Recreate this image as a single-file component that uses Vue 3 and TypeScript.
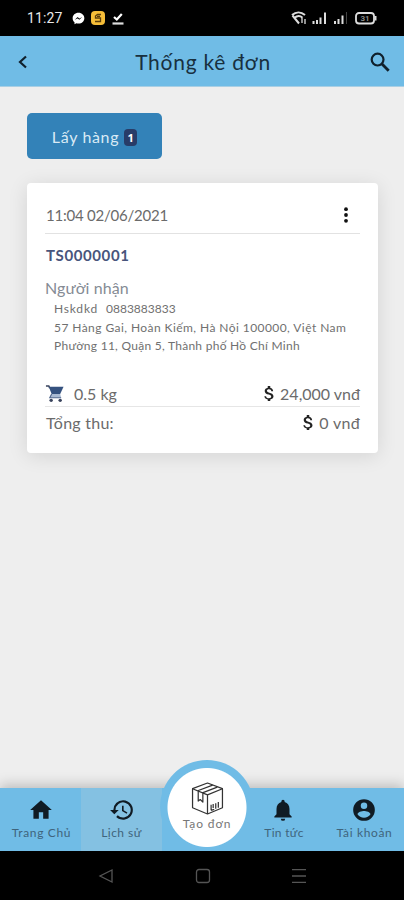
<script setup lang="ts">
interface Order {
  time: string
  code: string
  name: string
  phone: string
  address: string[]
  weight: string
  fee: string
  total: string
}

const order: Order = {
  time: '11:04 02/06/2021',
  code: 'TS0000001',
  name: 'Hskdkd',
  phone: '0883883833',
  address: ['57 Hàng Gai, Hoàn Kiếm, Hà Nội 100000, Việt Nam', 'Phường 11, Quận 5, Thành phố Hồ Chí Minh'],
  weight: '0.5 kg',
  fee: '24,000 vnđ',
  total: '0 vnđ',
}

const icons = {
  home: 'M10 20v-6h4v6h5v-8h3L12 3 2 12h3v8z',
  history:
    'M13 3a9 9 0 0 0-9 9H1l3.89 3.89.07.14L9 12H6a7 7 0 1 1 2.06 4.94l-1.42 1.42A9 9 0 1 0 13 3zm-1 5v5l4.28 2.54.72-1.21-3.5-2.08V8z',
  bell: 'M12 22a2 2 0 0 0 2-2h-4a2 2 0 0 0 2 2zm6-6v-5c0-3.07-1.64-5.64-4.5-6.32V4a1.5 1.5 0 0 0-3 0v.68C7.63 5.36 6 7.92 6 11v5l-2 2v1h16v-1z',
  user: 'M12 2a10 10 0 1 0 0 20 10 10 0 0 0 0-20zm0 3a3 3 0 1 1 0 6 3 3 0 0 1 0-6zm0 14.2A7.2 7.2 0 0 1 6 15.98c.03-1.99 4-3.08 6-3.08s5.97 1.09 6 3.08a7.2 7.2 0 0 1-6 3.22z',
  dollar:
    'M14.5 17.2c0 1.1-1 2.3-3.6 2.3-2.8 0-4.2-1.2-4.6-3.3H3.5c.4 3 2.7 4.7 5.5 5.2V24h4v-2.5c2.9-.5 5.2-2.1 5.2-5 0-4-3.5-5.1-6.6-5.9-3-.8-4-1.6-4-2.9 0-1.4 1.3-2.4 3.5-2.4 2.3 0 3.4 1.1 3.5 2.9h3c-.1-2.6-1.7-4.7-4.6-5.4V0H9v2.7C6.300 3.300 4.100 5.100 4.100 7.800c0 3.300 2.700 4.900 6.600 5.900 3.300.8 3.800 2 3.800 3.500z',
}
</script>

<template>
  <div class="screen">
    <div class="status">
      <span class="clock">11:27</span>
      <svg class="s-msg" viewBox="0 0 14 14">
        <path d="M7 .8C3.300.8.700 3.400.700 6.700c0 1.800.7 3.300 2 4.400v2.200l2-1.100c.7.2 1.500.3 2.300.3 3.700 0 6.300-2.600 6.300-5.800S10.700.8 7 .8z" fill="#fff" />
        <path d="M3 8.300 6 5.400l2 1.500 3-1.500-3 3-2-1.500z" fill="#111" />
      </svg>
      <svg class="s-app" viewBox="0 0 14 14">
        <rect width="14" height="14" rx="4" fill="#f5bd38" />
        <path d="M10 3.500H6.500L4.500 5v2h5v3.500H4M6 5.300h3" fill="none" stroke="#5b3e0a" stroke-width="1.300" />
      </svg>
      <svg class="s-check" viewBox="0 0 12 13">
        <path d="M2 5 4.800 7.500 9.800 2" fill="none" stroke="#fff" stroke-width="2.200" />
        <path d="M.5 11.500h11" stroke="#ddd" stroke-width="2.200" />
      </svg>
      <span class="grow"></span>
      <svg class="s-right" viewBox="0 0 88 14" fill="none" stroke="#ddd">
        <path d="M1 4C5 .5 10 .5 14 4M3.500 6.800c3-2.500 5.500-2.500 8 0M1.500 4.500l6.500 8" stroke-width="2" />
        <path d="M11 7v5M14 8v5" stroke-width="1.300" />
        <path d="M22.500 13v-3M26 13V9M29.500 13V6.500M34 13V1.500M44 13v-3M47.500 13V8M51.500 13V4.500" stroke-width="2" />
        <path d="M55.500 13V1" stroke="#444" />
        <rect x="65" y="2" width="18" height="10.500" rx="3" stroke-width="1.800" />
        <path d="M84.500 5v4.500" stroke-width="2" />
        <text x="69.500" y="10.400" class="batt">31</text>
      </svg>
    </div>

    <header class="top">
      <svg class="back" viewBox="0 0 10 14"><path d="M8 1.500 2 7l6 5.500" fill="none" stroke="#10202c" stroke-width="2.200" /></svg>
      <h1>Thống kê đơn</h1>
      <svg class="search" viewBox="0 0 20 20">
        <circle cx="7.600" cy="7.600" r="5.900" fill="none" stroke="#10202c" stroke-width="2.200" />
        <path d="m12 12 6.700 6.700" stroke="#10202c" stroke-width="2.800" />
      </svg>
    </header>

    <main>
      <button class="tab"><span>Lấy hàng</span><b>1</b></button>

      <section class="card">
        <div class="row head">
          <span class="time">{{ order.time }}</span>
          <svg class="dots" viewBox="0 0 4 16"><circle cx="2" cy="2.200" r="1.900" /><circle cx="2" cy="8" r="1.900" /><circle cx="2" cy="13.800" r="1.900" /></svg>
        </div>
        <div class="code"><span>{{ order.code }}</span></div>
        <div class="receiver">Người nhận</div>
        <div class="details">
          <div class="contact"><span class="name">{{ order.name }}</span><span class="phone">{{ order.phone }}</span></div>
          <div v-for="(line, i) in order.address" :key="i" :class="'addr' + i">{{ line }}</div>
        </div>
        <div class="row fee">
          <svg class="cart" viewBox="0 0 20 20">
            <path d="M1 2h3l1 2.500" fill="none" stroke="#39435c" stroke-width="1.600" />
            <path d="M4 3h15.500L16 10.500H7z" fill="#35527f" />
            <path d="M7 10.500h9l1 4H5z" fill="#a9bad2" />
            <path d="M7 10.500l-2 4h12" fill="none" stroke="#53698e" stroke-width="1.200" />
            <circle cx="6.500" cy="17.200" r="1.800" fill="#39435c" /><circle cx="16" cy="17.200" r="1.800" fill="#39435c" />
          </svg>
          <span class="weight">{{ order.weight }}</span>
          <span class="grow"></span>
          <svg class="dollar" viewBox="3 0 16 24"><path :d="icons.dollar" /></svg>
          <span class="price">{{ order.fee }}</span>
        </div>
        <div class="row total">
          <span class="sum">Tổng thu:</span>
          <span class="grow"></span>
          <svg class="dollar" viewBox="3 0 16 24"><path :d="icons.dollar" /></svg>
          <span class="zero">{{ order.total }}</span>
        </div>
      </section>
    </main>

    <nav class="tabs">
      <div class="item"><svg viewBox="0 0 24 24"><path :d="icons.home" /></svg><span class="l-home">Trang Chủ</span></div>
      <div class="item active"><svg viewBox="0 0 24 24"><path :d="icons.history" /></svg><span class="l-hist">Lịch sử</span></div>
      <div class="item"></div>
      <div class="item"><svg viewBox="0 0 24 24"><path :d="icons.bell" /></svg><span class="l-news">Tin tức</span></div>
      <div class="item"><svg viewBox="0 0 24 24"><path :d="icons.user" /></svg><span class="l-user">Tài khoản</span></div>
      <div class="create">
        <svg viewBox="0 0 32 32" fill="none" stroke="#333" stroke-width="1.200" stroke-linejoin="round">
          <path d="M16 1 30.500 6.500v18.500L16 31 1.500 25V6.500z" />
          <path d="M1.500 6.500 16 12.500l14.500-6M16 12.500V31M6.500 8.500l14.500-5.500M11 10.500l14.500-5.500M7 9v9.500l2-1.500 2.500 2.500V11" />
          <path d="M19.500 22v5.500M21.500 21.300v4M24 20.500v5.500M26.500 19.500v5.500M19.500 27.500l3-1" />
        </svg>
        <span>Tạo đơn</span>
      </div>
    </nav>

    <div class="system">
      <svg class="y-back" viewBox="0 0 16 16"><path d="M14 2v12L2 8z" /></svg>
      <svg class="y-home" viewBox="0 0 16 16"><rect x="1.500" y="1.500" width="13" height="13" rx="2.500" /></svg>
      <svg class="y-menu" viewBox="0 0 16 16"><path d="M1 1.700h14M1 8h14M1 14.300h14" /></svg>
    </div>
  </div>
</template>

<style>
body {
  background: #eee;
}
</style>

<style scoped>
.screen {
  width: 404px;
  height: 900px;
  display: flex;
  flex-direction: column;
  background: #eee;
  font-family: Lato, "Noto Sans", sans-serif;
  color: #6b6b6b;
  overflow: hidden;
  white-space: nowrap;
}
svg {
  display: block;
  flex: none;
}
.grow {
  flex: 1;
}
.status {
  height: 36px;
  flex: none;
  box-sizing: border-box;
  padding: 0 25px 0 27px;
  background: #000;
  display: flex;
  align-items: center;
}
.clock {
  font: 400 14px/36px Roboto, sans-serif;
  letter-spacing: 0.1px;
  color: #e8e8e8;
  width: 45px;
}
.s-msg { width: 13px; height: 13px; margin-right: 6px; }
.s-app { width: 14px; height: 14px; margin-right: 7px; }
.s-check { width: 12px; height: 13px; }
.s-right { width: 88px; height: 14px; }
.batt {
  font: 700 8px Roboto, sans-serif;
  fill: #888;
  stroke: none;
}
.top {
  height: 51px;
  flex: none;
  box-sizing: border-box;
  padding: 2px 14px 0 18px;
  background: #70bce6;
  border-bottom: 1px solid #a9cfe4;
  display: flex;
  align-items: center;
  justify-content: space-between;
}
.back { width: 10px; height: 14px; }
.search { width: 20px; height: 20px; }
h1 {
  margin: 0;
  padding: 0 0 2px 8px;
  font-size: 21px;
  font-weight: 400;
  letter-spacing: 0.75px;
  color: #18303f;
}
main {
  flex: 1;
  padding: 26px 26px 0 27px;
}
.tab {
  display: flex;
  align-items: center;
  justify-content: center;
  width: 135px;
  height: 46px;
  padding: 0;
  border: 0;
  border-radius: 5px;
  background: #3382b8;
  color: #d9eaf5;
  font: 400 16px Lato, "Noto Sans", sans-serif;
  letter-spacing: 0.65px;
  gap: 5px;
}
.tab b {
  width: 13px;
  height: 17px;
  margin-top: 2px;
  border-radius: 4px;
  background: #283c68;
  color: #fff;
  font: 700 11px/17px "Open Sans", sans-serif;
  letter-spacing: 0;
  text-align: center;
}
.card {
  box-sizing: border-box;
  height: 270px;
  margin-top: 24px;
  padding: 14px 18px 0;
  border-radius: 4px;
  background: #fff;
  box-shadow: 0 3px 20px rgba(0, 0, 0, 0.11);
}
.row {
  display: flex;
  align-items: center;
}
.head {
  height: 36px;
  border-bottom: 1px solid #e2e2e2;
  justify-content: space-between;
}
.time { font-size: 15px; letter-spacing: -0.22px; padding-left: 1px; }
.dots { width: 4px; height: 16px; margin-right: 12px; fill: #111; }
.code {
  height: 42px;
  line-height: 43px;
  padding-left: 1px;
  font-size: 15px;
  font-weight: 700;
  letter-spacing: 0.6px;
  color: #48557c;
}
.receiver {
  height: 24px;
  line-height: 23px;
  font-size: 16px;
  letter-spacing: 0.1px;
  color: #858b94;
}
.details {
  padding-left: 9px;
  font-size: 12px;
  line-height: 18.600px;
  height: 82px;
  color: #707070;
}
.contact { display: flex; }
.name { width: 52px; letter-spacing: 0.8px; }
.addr0 { letter-spacing: 0.43px; }
.addr1 { letter-spacing: 0.27px; }
.fee {
  height: 24px;
  border-bottom: 1px solid #e6e6e6;
  font-size: 16px;
}
.cart { width: 19px; height: 19px; margin: 0 10px 2px 0; }
.dollar { width: 10px; height: 17px; margin: 0 6px 2px 0; fill: #222; }
.weight, .price { padding-bottom: 2px; }
.total {
  height: 32px;
  font-size: 16px;
}
.sum { letter-spacing: 0.25px; padding: 0 0 1px 1px; }
.zero { letter-spacing: 0.3px; padding-bottom: 1px; }
.tabs {
  position: relative;
  height: 63px;
  flex: none;
  display: grid;
  grid-template-columns: 81px 81px 81px 80px 81px;
  background: #70bce6;
  box-shadow: 0 -3px 12px rgba(0, 0, 0, 0.22);
}
.item {
  display: flex;
  flex-direction: column;
  align-items: center;
  padding-top: 9px;
  font-size: 12px;
  line-height: 19px;
  color: #3f647c;
}
.item svg { width: 26px; height: 26px; fill: #101b24; }
.l-home { letter-spacing: 0.65px; padding-left: 2px; }
.l-hist { letter-spacing: 0.45px; }
.l-news { letter-spacing: 0.3px; padding-left: 2px; }
.l-user { letter-spacing: 0.65px; padding-left: 2px; }
.active { background: #84c1e2; }
.create {
  position: absolute;
  left: 160px;
  top: -28px;
  box-sizing: border-box;
  width: 94px;
  height: 91px;
  padding-top: 22px;
  border-radius: 47px 47px 44px 44px;
  background: radial-gradient(circle at 47px 47.500px, #fff 39px, #70bce6 40px);
  display: flex;
  flex-direction: column;
  align-items: center;
  font-size: 12px;
  line-height: 18px;
  letter-spacing: 0.9px;
  color: #777;
}
.create svg { width: 33px; height: 33px; }
.system {
  height: 49px;
  flex: none;
  box-sizing: border-box;
  padding: 0 97px 0 98px;
  background: #000;
  display: flex;
  align-items: center;
  justify-content: space-between;
}
.system svg {
  width: 16px;
  height: 16px;
  fill: none;
  stroke: #555;
  stroke-width: 1.300;
}
</style>
